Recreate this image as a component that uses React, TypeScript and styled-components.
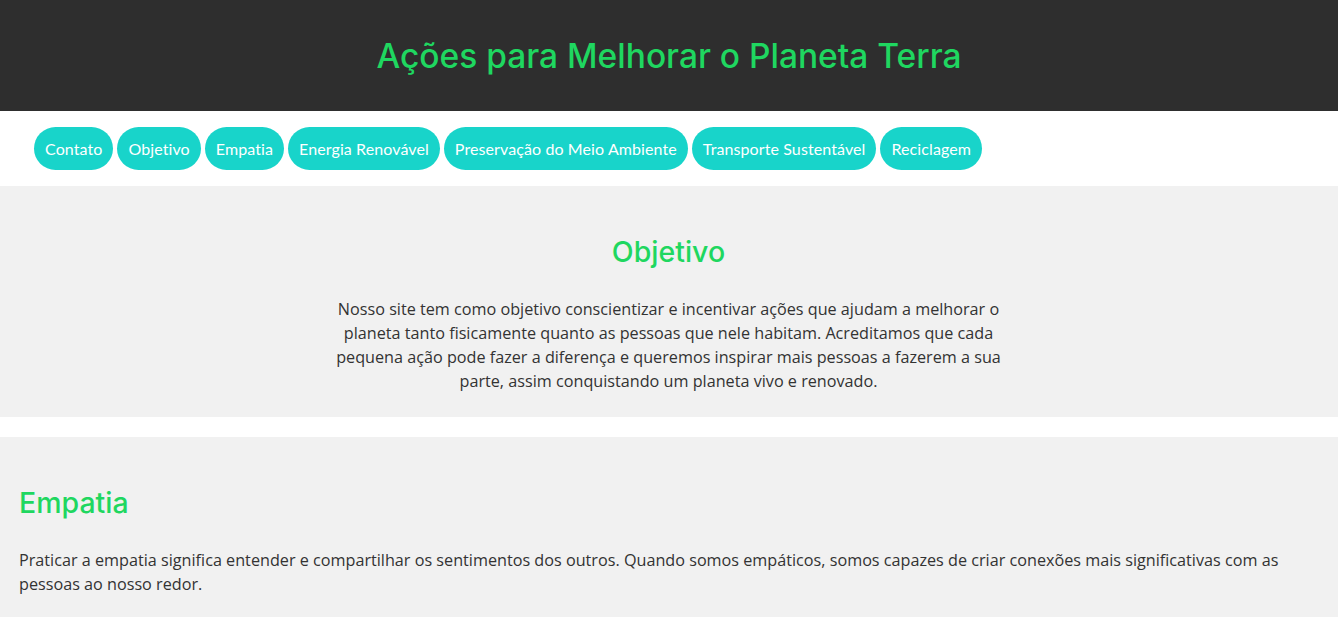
import React from "react";
import styled, { createGlobalStyle } from "styled-components";

const Global = createGlobalStyle`
  html, body { margin: 0; padding: 0; background: #ffffff; }
  body { font-family: "Open Sans", "Lato", sans-serif; color: #333333; }
  * { box-sizing: border-box; }
`;

const green = "#1fd760";

const Header = styled.header`
  background: #2e2e2e;
  height: 111px;
  display: flex;
  align-items: center;
  justify-content: center;
`;

const Title = styled.h1`
  margin: 0;
  font-family: "Inter", "Roboto", sans-serif;
  font-weight: 500;
  font-size: 33.5px;
  color: ${green};
`;

const Nav = styled.nav`
  background: #ffffff;
  padding: 16px 34px;
  display: flex;
  flex-wrap: wrap;
  gap: 4px;
`;

const NavButton = styled.a`
  display: inline-flex;
  align-items: center;
  height: 43px;
  padding: 0 11px;
  border-radius: 22px;
  background: #18d4ca;
  color: #ffffff;
  font-family: "Lato", sans-serif;
  font-size: 16px;
  letter-spacing: 0.1px;
  text-decoration: none;
  cursor: pointer;
`;

const Section = styled.section<{ $center?: boolean }>`
  background: #f1f1f1;
  padding: 45px 20px 24px 19px;
  text-align: ${(p) => (p.$center ? "center" : "left")};
  & + & { margin-top: 20px; }
`;

const Heading = styled.h2`
  margin: 0 0 24px;
  font-family: "Inter", "Roboto", sans-serif;
  font-weight: 500;
  font-size: 28.5px;
  line-height: 42px;
  color: ${green};
`;

const Text = styled.p<{ $narrow?: boolean }>`
  margin: ${(p) => (p.$narrow ? "0 auto" : "0")};
  max-width: ${(p) => (p.$narrow ? "680px" : "none")};
  font-size: 16.2px;
  line-height: 24px;
  color: #333333;
`;

const links = [
  "Contato",
  "Objetivo",
  "Empatia",
  "Energia Renovável",
  "Preservação do Meio Ambiente",
  "Transporte Sustentável",
  "Reciclagem",
];

export default function App() {
  return (
    <>
      <Global />
      <Header>
        <Title>Ações para Melhorar o Planeta Terra</Title>
      </Header>
      <Nav>
        {links.map((l) => (
          <NavButton key={l}>{l}</NavButton>
        ))}
      </Nav>
      <Section $center>
        <Heading>Objetivo</Heading>
        <Text $narrow>
          Nosso site tem como objetivo conscientizar e incentivar ações que ajudam a melhorar o
          planeta tanto fisicamente quanto as pessoas que nele habitam. Acreditamos que cada
          pequena ação pode fazer a diferença e queremos inspirar mais pessoas a fazerem a sua
          parte, assim conquistando um planeta vivo e renovado.
        </Text>
      </Section>
      <Section>
        <Heading>Empatia</Heading>
        <Text>
          Praticar a empatia significa entender e compartilhar os sentimentos dos outros. Quando
          somos empáticos, somos capazes de criar conexões mais significativas com as pessoas ao
          nosso redor.
        </Text>
      </Section>
    </>
  );
}
